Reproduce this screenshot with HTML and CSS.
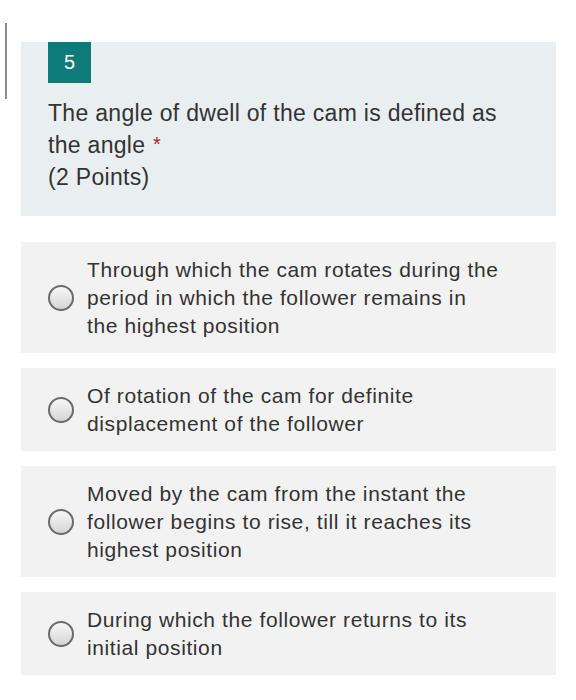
FILE: index.html
```html
<!DOCTYPE html>
<html>
<head>
<meta charset="utf-8">
<link rel="stylesheet" href="styles.css">
</head>
<body>
<div class="scrollbar"></div>
<div class="page">
  <div class="question">
    <div class="badge">5</div>
    <div class="qtext">The angle of dwell of the cam is defined as<br>the angle <span class="req">*</span><br>(2 Points)</div>
  </div>
  <div class="options">
    <div class="option"><span class="radio"></span><span class="label">Through which the cam rotates during the<br>period in which the follower remains in<br>the highest position</span></div>
    <div class="option"><span class="radio"></span><span class="label">Of rotation of the cam for definite<br>displacement of the follower</span></div>
    <div class="option"><span class="radio"></span><span class="label">Moved by the cam from the instant the<br>follower begins to rise, till it reaches its<br>highest position</span></div>
    <div class="option"><span class="radio"></span><span class="label">During which the follower returns to its<br>initial position</span></div>
  </div>
</div>
</body>
</html>
```

FILE: styles.css
```css
html, body {
  margin: 0;
  padding: 0;
  background: #ffffff;
}
body {
  font-family: "Liberation Sans", Arial, sans-serif;
  color: #333333;
  position: relative;
  width: 576px;
  height: 700px;
  overflow: hidden;
}
.scrollbar {
  position: absolute;
  left: 5px;
  top: 23px;
  width: 2px;
  height: 76px;
  background: #8c8c8c;
}
.page {
  padding: 43px 20px 0 21px;
}
.question {
  background: #e9eff1;
  padding: 0 27px 24px 27px;
  height: 174px;
  box-sizing: border-box;
}
.badge {
  width: 43px;
  height: 41px;
  margin-top: -1px;
  background: #0e7b7b;
  color: #ffffff;
  font-size: 20px;
  display: flex;
  align-items: center;
  justify-content: center;
}
.qtext {
  margin-top: 15px;
  font-size: 23px;
  letter-spacing: 0.3px;
  line-height: 31.5px;
  color: #333333;
  white-space: nowrap;
}
.req {
  color: #a4262c;
  font-size: 20px;
  margin-left: 1px;
  position: relative;
  top: -2px;
}
.options {
  margin-top: 26px;
  display: flex;
  flex-direction: column;
  gap: 15px;
}
.option {
  background: #f2f2f2;
  display: flex;
  align-items: center;
  padding: 13.5px 20px 13.5px 27px;
  min-height: 83px;
  box-sizing: border-box;
}
.radio {
  flex: 0 0 auto;
  width: 22px;
  height: 22px;
  border-radius: 50%;
  border: 2px solid #6b6b6b;
  background: linear-gradient(#f7f7f7, #d6d6d6);
  margin-right: 13px;
}
.label {
  font-size: 21px;
  letter-spacing: 0.6px;
  line-height: 28px;
  color: #333333;
  white-space: nowrap;
}
```
